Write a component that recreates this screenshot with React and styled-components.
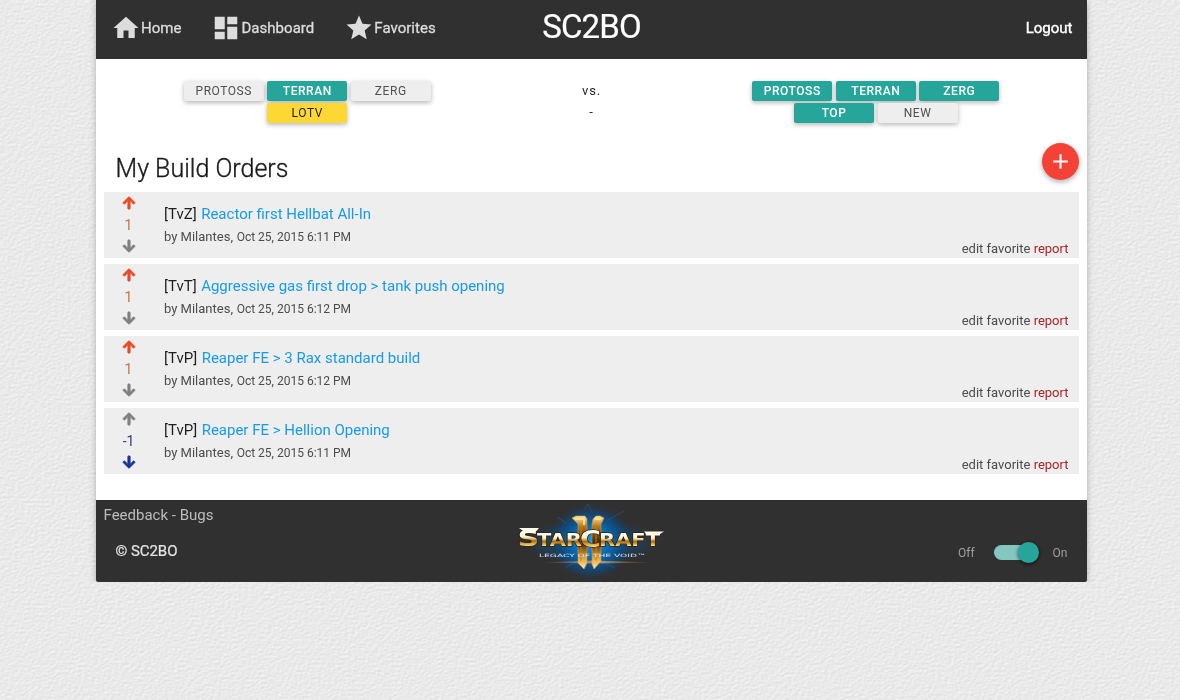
import React from "react";
import styled, { createGlobalStyle, css } from "styled-components";
import { MdHome, MdDashboard, MdStar, MdAdd } from "react-icons/md";
import { FaArrowUp, FaArrowDown } from "react-icons/fa";

const GlobalStyle = createGlobalStyle`
  * { box-sizing: border-box; }
  body {
    margin: 0;
    background: #e9e9e9;
    font-family: Roboto, sans-serif;
    font-size: 15px;
    line-height: 1.5;
    color: rgba(0, 0, 0, 0.87);
    overflow: hidden;
  }
  a { color: inherit; text-decoration: none; }
`;

const Texture = styled.svg`
  position: fixed;
  inset: 0;
  width: 100%;
  height: 100%;
  z-index: -1;
`;

const Container = styled.div`
  width: 991px;
  margin-left: 96px;
  background: #fff;
  border-radius: 0 0 2px 2px;
  box-shadow: 0 2px 5px 0 rgba(0, 0, 0, 0.16), 0 2px 10px 0 rgba(0, 0, 0, 0.12);
`;

const Header = styled.header`
  display: grid;
  grid-template-columns: 1fr auto 1fr;
  height: 59px;
  background: #303030;
  color: #fff;
`;

const Nav = styled.nav`
  display: flex;
  height: 56px;
`;

const NavLink = styled.a`
  display: flex;
  align-items: center;
  padding: 0 15px;
  color: #ddd;
  font-size: 15px;
  letter-spacing: 0.03px;
  -webkit-text-stroke: 0.3px #ddd;
  svg { width: 30px; height: 30px; flex: none; margin-left: -0.5px; margin-right: 0.5px; }
`;

const Brand = styled.a`
  font-size: 33px;
  line-height: 54px;
  letter-spacing: -0.85px;
  -webkit-text-stroke: 0.2px #fff;
`;

const Logout = styled.a`
  justify-self: end;
  padding-right: 14.5px;
  line-height: 56px;
  -webkit-text-stroke: 0.4px #fff;
`;

const Filters = styled.section`
  display: grid;
  grid-template-columns: 422.5px 1fr 422.5px;
  height: 84px;
  padding-top: 22px;
`;

const FilterGroup = styled.div`
  display: flex;
  flex-direction: column;
  align-items: center;
  gap: 2px;
`;

const FilterRow = styled.div`
  display: flex;
  gap: 3.5px;
`;

const tones = {
  off: css`background: #eee; color: #505050;`,
  on: css`background: #26a69a; color: #fff; font-weight: 500;`,
  yellow: css`background: #fdd835; color: #222;`,
};

const FilterButton = styled.button`
  width: 80px;
  height: 20px;
  padding: 0;
  border: 0;
  border-radius: 2px;
  font: 400 12px/20px Roboto, sans-serif;
  letter-spacing: 0.55px;
  box-shadow: 0 2px 4px 0 rgba(0, 0, 0, 0.2), 0 1px 6px 0 rgba(0, 0, 0, 0.1);
  ${(p) => tones[p.$tone]}
`;

const Versus = styled.div`
  text-align: center;
  font-size: 13px;
  line-height: 21px;
  letter-spacing: 0.8px;
  margin-top: -1px;
`;

const ListHeader = styled.div`
  display: flex;
  justify-content: space-between;
  height: 49px;
  padding: 0 8px 0 19.5px;
`;

const Heading = styled.h1`
  margin: 0;
  font-size: 25px;
  font-weight: 300;
  line-height: 51px;
  -webkit-text-stroke: 0.35px rgba(0, 0, 0, 0.87);
`;

const AddButton = styled.button`
  display: flex;
  align-items: center;
  justify-content: center;
  width: 37px;
  height: 37px;
  padding: 0 0 1px;
  border: 0;
  border-radius: 50%;
  background: #f44336;
  color: #fff;
  box-shadow: 0 2px 5px 0 rgba(0, 0, 0, 0.22), 0 2px 6px 0 rgba(0, 0, 0, 0.12);
  svg { width: 25px; height: 25px; }
`;

const List = styled.main`
  display: flex;
  flex-direction: column;
  gap: 6px;
  padding: 0 8px 26px;
`;

const Row = styled.article`
  display: flex;
  height: 66px;
  background: #eee;
`;

const Votes = styled.div`
  display: flex;
  flex-direction: column;
  align-items: center;
  width: 49px;
  padding-top: 4px;
  svg {
    display: block;
    width: 14px;
    height: 14px;
    stroke: currentColor;
    stroke-width: 34px;
  }
`;

const Score = styled.span`
  height: 29px;
  line-height: 30px;
  font-size: 14px;
  color: ${(p) => p.$color};
`;

const Details = styled.div`
  flex: 1;
  padding: 11px 0 0 11px;
`;

const Title = styled.div`
  font-size: 15px;
  line-height: 22px;
  a { color: #179be5; margin-left: 0.8px; }
`;

const Byline = styled.div`
  font-size: 13px;
  line-height: 23px;
  color: #4c4c4c;
  small { font-size: 12px; margin-left: 0.5px; }
`;

const Actions = styled.div`
  align-self: flex-end;
  padding-right: 10.5px;
  font-size: 13px;
  line-height: 19px;
  color: #4c4c4c;
`;

const Report = styled.a`
  && { color: #ad2424; }
`;

const Footer = styled.footer`
  display: grid;
  grid-template-columns: 1fr 152px 1fr;
  height: 82px;
  background: #303030;
  border-radius: 0 0 2px 2px;
`;

const FooterLinks = styled.div`
  padding: 4px 0 0 7.5px;
  color: #bdbdbd;
`;

const Copyright = styled.div`
  padding: 13px 0 0 19.5px;
  color: #e4e4e4;
  letter-spacing: -0.05px;
  -webkit-text-stroke: 0.2px #e4e4e4;
`;

const LogoSvg = styled.svg`
  display: block;
  width: 152px;
  height: 82px;
`;

const SwitchLabel = styled.label`
  justify-self: end;
  display: flex;
  align-items: center;
  height: 25px;
  margin: 40px 19.5px 0 0;
  font-size: 12px;
  color: #9e9e9e;
`;

const Lever = styled.span`
  display: flex;
  align-items: center;
  width: 40px;
  height: 15px;
  margin: 0 19px 0 19px;
  padding-left: 24px;
  border-radius: 15px;
  background: #84c7c1;
`;

const Knob = styled.span`
  flex: none;
  width: 21px;
  height: 21px;
  border-radius: 50%;
  background: #26a69a;
  box-shadow: 0 1px 3px 1px rgba(0, 0, 0, 0.4);
`;

const builds = [
  { match: "TvZ", title: "Reactor first Hellbat All-In", time: "6:11", score: 1 },
  { match: "TvT", title: "Aggressive gas first drop > tank push opening", time: "6:12", score: 1 },
  { match: "TvP", title: "Reaper FE > 3 Rax standard build", time: "6:12", score: 1 },
  { match: "TvP", title: "Reaper FE > Hellion Opening", time: "6:11", score: -1 },
];

function Logo() {
  return (
    <LogoSvg viewBox="0 0 152 82" role="img" aria-label="StarCraft II Legacy of the Void">
      <defs>
        <radialGradient id="glow">
          <stop offset="0" stopColor="#179bf0" />
          <stop offset="0.45" stopColor="#0868b0" stopOpacity="0.95" />
          <stop offset="0.72" stopColor="#0d4b80" stopOpacity="0.75" />
          <stop offset="1" stopColor="#303030" stopOpacity="0" />
        </radialGradient>
        <linearGradient id="gold" x2="0" y2="1">
          <stop offset="0" stopColor="#ffe9a0" />
          <stop offset="0.2" stopColor="#b87418" />
          <stop offset="0.5" stopColor="#472405" />
          <stop offset="0.75" stopColor="#d79528" />
          <stop offset="1" stopColor="#fff0af" />
        </linearGradient>
        <linearGradient id="letters" x2="0" y2="1">
          <stop offset="0.2" stopColor="#fff" />
          <stop offset="0.44" stopColor="#fff2c0" />
          <stop offset="0.6" stopColor="#a86c14" />
          <stop offset="0.8" stopColor="#ffe07a" />
        </linearGradient>
        <linearGradient id="flare">
          <stop offset="0" stopColor="#e48b3c" stopOpacity="0" />
          <stop offset="0.5" stopColor="#ffb45d" />
          <stop offset="1" stopColor="#e48b3c" stopOpacity="0" />
        </linearGradient>
      </defs>
      <ellipse cx="74" cy="42" rx="74" ry="24" fill="url(#glow)" opacity="0.5" />
      <ellipse cx="75" cy="42" rx="44" ry="40" fill="url(#glow)" />
      <path d="M68 10 72 4 76 12M92 20 108 11M50 23 41 17M49 68 61 61M87 62 99 68" stroke="#1582c8" strokeWidth="0.7" opacity="0.5" fill="none" />
      <g fill="url(#gold)" stroke="#d99a38" strokeWidth="0.6">
        <path d="M56 18 60 16H69L71 19V63L68 69 62 63V24Z" />
        <path d="M77 19 80 16H84L88 18 85 24V61L78 69 76 64V24Z" />
      </g>
      <path d="M59 19H68V25M79 19H85" fill="none" stroke="#ffe8a0" strokeWidth="1.6" />
      <path d="M65 26V61M80 27V61" fill="none" stroke="#c47f1c" strokeWidth="1" />
      <g fontFamily="'DejaVu Sans', sans-serif" fontWeight="700" fill="url(#letters)" stroke="#35210c" strokeWidth="1.4" paintOrder="stroke">
        <text x="1.5" y="46" fontSize="21.5" textLength="22" lengthAdjust="spacingAndGlyphs">S</text>
        <text x="21" y="46" fontSize="18" textLength="45" lengthAdjust="spacingAndGlyphs">TAR</text>
        <text x="64" y="47" fontSize="23" textLength="21" lengthAdjust="spacingAndGlyphs">C</text>
        <text x="83" y="46" fontSize="18" textLength="61" lengthAdjust="spacingAndGlyphs">RAFT</text>
      </g>
      <path d="M3 28H23L20 31.5H8ZM128 31.5H148L144 34H130Z" fill="#fffbe8" />
      <path d="M22 62.5 76 60.5 140 62.5 76 63.5Z" fill="url(#flare)" opacity="0.7" />
      <text x="23" y="56.8" fontFamily="'DejaVu Sans', sans-serif" fontSize="4.4" fill="#d3e6f6" textLength="107" lengthAdjust="spacingAndGlyphs">LEGACY OF THE VOID™</text>
    </LogoSvg>
  );
}

function Filter({ races, extras }) {
  return (
    <FilterGroup>
      {[races, extras].map((row, i) => (
        <FilterRow key={i}>
          {row.map(([label, tone]) => (
            <FilterButton key={label} $tone={tone}>{label}</FilterButton>
          ))}
        </FilterRow>
      ))}
    </FilterGroup>
  );
}

function Build({ match, title, time, score }) {
  const up = score > 0;
  return (
    <Row>
      <Votes>
        <FaArrowUp color={up ? "#e64a28" : "#808080"} />
        <Score $color={up ? "#c8713c" : "#34406a"}>{score}</Score>
        <FaArrowDown color={up ? "#808080" : "#1c3499"} />
      </Votes>
      <Details>
        <Title>[{match}] <a href="#build">{title}</a></Title>
        <Byline>by Milantes, <small>Oct 25, 2015 {time} PM</small></Byline>
      </Details>
      <Actions>
        <a href="#edit">edit</a> <a href="#favorite">favorite</a> <Report href="#report">report</Report>
      </Actions>
    </Row>
  );
}

export default function App() {
  return (
    <>
      <GlobalStyle />
      <Texture aria-hidden="true">
        <filter id="paper" x="0" y="0" width="100%" height="100%" colorInterpolationFilters="sRGB">
          <feTurbulence type="fractalNoise" baseFrequency="0.3 0.42" numOctaves="3" seed="7" />
          <feDiffuseLighting lightingColor="#fff" surfaceScale="0.1" diffuseConstant="1.295">
            <feDistantLight azimuth="235" elevation="45" />
          </feDiffuseLighting>
        </filter>
        <rect width="100%" height="100%" filter="url(#paper)" />
      </Texture>
      <Container>
        <Header>
          <Nav>
            <NavLink href="#home"><MdHome />Home</NavLink>
            <NavLink href="#dashboard"><MdDashboard />Dashboard</NavLink>
            <NavLink href="#favorites"><MdStar />Favorites</NavLink>
          </Nav>
          <Brand href="#home">SC2BO</Brand>
          <Logout href="#logout">Logout</Logout>
        </Header>
        <Filters>
          <Filter
            races={[["PROTOSS", "off"], ["TERRAN", "on"], ["ZERG", "off"]]}
            extras={[["LOTV", "yellow"]]}
          />
          <Versus>vs.<br />-</Versus>
          <Filter
            races={[["PROTOSS", "on"], ["TERRAN", "on"], ["ZERG", "on"]]}
            extras={[["TOP", "on"], ["NEW", "off"]]}
          />
        </Filters>
        <ListHeader>
          <Heading>My Build Orders</Heading>
          <AddButton aria-label="Add build order"><MdAdd /></AddButton>
        </ListHeader>
        <List>
          {builds.map((b) => <Build key={b.title} {...b} />)}
        </List>
        <Footer>
          <div>
            <FooterLinks><a href="#feedback">Feedback - Bugs</a></FooterLinks>
            <Copyright>© SC2BO</Copyright>
          </div>
          <Logo />
          <SwitchLabel>Off<Lever><Knob /></Lever>On</SwitchLabel>
        </Footer>
      </Container>
    </>
  );
}
